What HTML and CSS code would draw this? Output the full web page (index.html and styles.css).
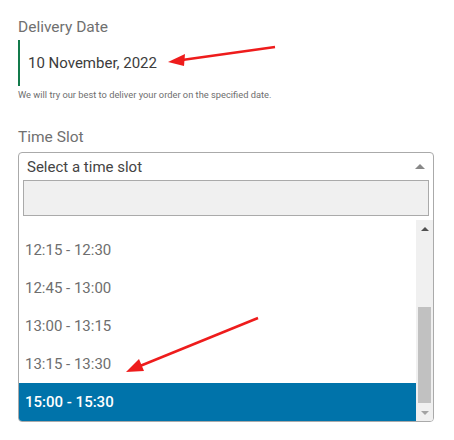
FILE: index.html
```html
<!DOCTYPE html>
<html lang="en">
<head>
    <meta charset="UTF-8">
    <meta name="viewport" content="width=device-width, initial-scale=1.0">
    <title>Delivery Options</title>
    <link rel="stylesheet" href="styles.css">
</head>
<body>

    <div class="checkout-form">
        <!-- Delivery date -->
        <div class="field">
            <label class="field-label">Delivery Date</label>
            <div class="date-value">10 November, 2022</div>
            <p class="field-help">We will try our best to deliver your order on the specified date.</p>
        </div>

        <!-- Time slot dropdown (opened) -->
        <div class="field">
            <label class="field-label">Time Slot</label>
            <div class="slot-select">
                <div class="slot-current">
                    <span>Select a time slot</span>
                    <span class="caret-up"></span>
                </div>
                <div class="slot-search-wrap">
                    <input type="text" class="slot-search">
                </div>
                <div class="slot-results">
                    <!-- list is scrolled: the 12:00 slot sits above the visible area -->
                    <ul class="slot-list">
                        <li class="slot-option">12:15 - 12:30</li>
                        <li class="slot-option">12:45 - 13:00</li>
                        <li class="slot-option">13:00 - 13:15</li>
                        <li class="slot-option">13:15 - 13:30</li>
                        <li class="slot-option selected">15:00 - 15:30</li>
                    </ul>
                    <div class="scrollbar">
                        <span class="sb-arrow up"></span>
                        <div class="sb-track">
                            <div class="sb-thumb"></div>
                        </div>
                        <span class="sb-arrow down"></span>
                    </div>
                </div>
            </div>
        </div>
    </div>

    <!-- annotation arrows -->
    <svg class="annotations" width="454" height="440" viewBox="0 0 454 440">
        <line x1="275" y1="47" x2="182" y2="60" stroke="#ee1c1c" stroke-width="2.5"/>
        <polygon points="168,62 185,54 184,66" fill="#ee1c1c"/>
        <line x1="258" y1="318" x2="140" y2="366" stroke="#ee1c1c" stroke-width="2.5"/>
        <polygon points="126,372 139,359 144,371" fill="#ee1c1c"/>
    </svg>

</body>
</html>
```

FILE: styles.css
```css
/* General styling */
* {
    margin: 0;
    padding: 0;
    box-sizing: border-box;
}

body {
    background-color: #ffffff;
    font-family: Roboto, "Open Sans", sans-serif;
    color: #6e6e6e;
    position: relative;
}

.checkout-form {
    padding: 17px 20px 0 18px;
}

.field-label {
    display: block;
    font-size: 15.5px;
    line-height: 20px;
    color: #707070;
}

.date-value {
    margin-top: 3px;
    height: 46px;
    border-left: 2px solid #137a4b;
    padding-left: 8px;
    display: flex;
    align-items: center;
    font-size: 15px;
    color: #3c3c3c;
}

.field-help {
    margin-top: 2px;
    font-size: 9.3px;
    line-height: 14px;
    color: #6e6e6e;
}

.field + .field {
    margin-top: 25px;
}

/* Select box */
.slot-select {
    margin-top: 5px;
    border: 1px solid #aaaaaa;
    border-radius: 4px;
    width: 416px;
    overflow: hidden;
}

.slot-current {
    height: 27px;
    display: flex;
    justify-content: space-between;
    align-items: center;
    padding: 0 8px 0 8px;
    font-size: 15px;
    color: #444444;
}

.caret-up {
    width: 0;
    height: 0;
    border-left: 5px solid transparent;
    border-right: 5px solid transparent;
    border-bottom: 5px solid #888888;
}

.slot-search-wrap {
    padding: 0 4px;
}

.slot-search {
    display: block;
    width: 100%;
    height: 36px;
    background-color: #f0f0f0;
    border: 1px solid #aaaaaa;
    outline: none;
}

.slot-results {
    margin-top: 4px;
    height: 201px;
    display: flex;
    overflow: hidden;
}

.slot-list {
    list-style: none;
    flex-grow: 1;
    padding-top: 11px;
}

.slot-option {
    height: 38px;
    display: flex;
    align-items: center;
    padding-left: 6px;
    font-size: 15px;
    color: #6e6e6e;
}

.slot-option.selected {
    background-color: #0073aa;
    color: #ffffff;
    font-weight: 500;
}

/* Fake scrollbar */
.scrollbar {
    width: 17px;
    background-color: #f0f0f0;
    display: flex;
    flex-direction: column;
    align-items: center;
}

.sb-arrow {
    width: 0;
    height: 0;
    border-left: 4px solid transparent;
    border-right: 4px solid transparent;
}

.sb-arrow.up {
    margin-top: 7px;
    border-bottom: 4px solid #505050;
}

.sb-arrow.down {
    margin-bottom: 6px;
    border-top: 4px solid #a3a3a3;
}

.sb-track {
    flex-grow: 1;
    width: 100%;
    display: flex;
    flex-direction: column;
    justify-content: flex-end;
    padding: 0 2px 8px 2px;
}

.sb-thumb {
    height: 96px;
    background-color: #c1c1c1;
}

.annotations {
    position: absolute;
    top: 0;
    left: 0;
    pointer-events: none;
}
```
